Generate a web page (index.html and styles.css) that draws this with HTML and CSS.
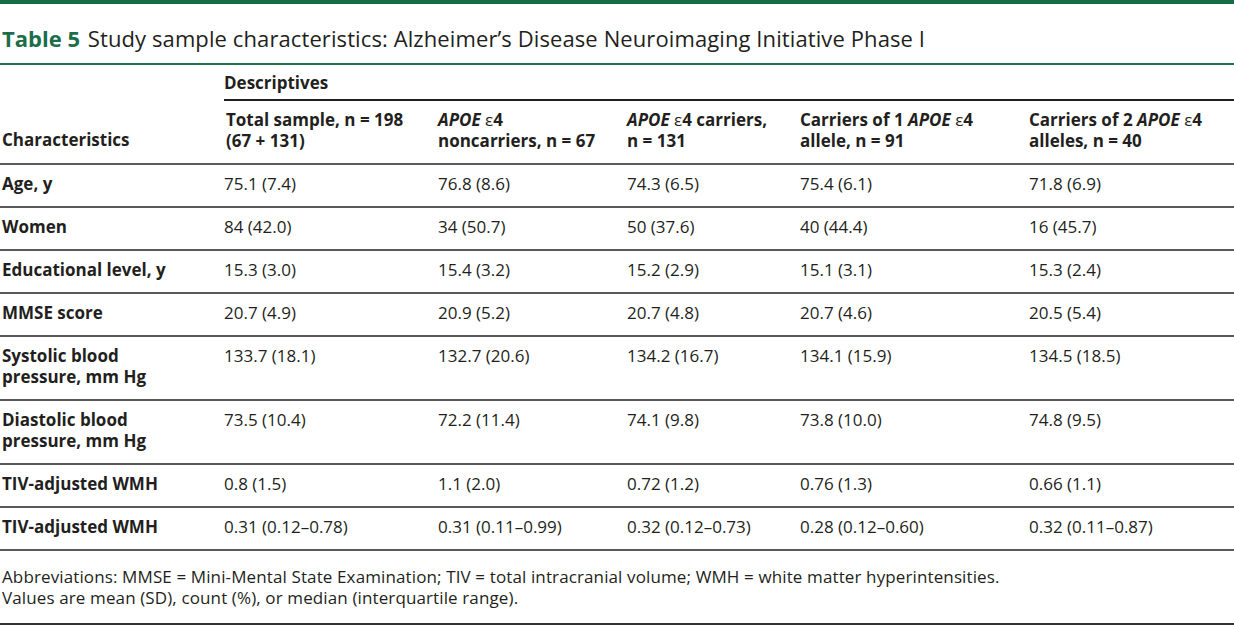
FILE: index.html
```html
<!DOCTYPE html>
<html lang="en">
<head>
<meta charset="utf-8">
<title>Table 5</title>
<link rel="stylesheet" href="styles.css">
</head>
<body>
<div class="topbar"></div>
<h1 class="title"><span class="label">Table 5</span> Study sample characteristics: Alzheimer’s Disease Neuroimaging Initiative Phase I</h1>
<table class="data">
  <colgroup>
    <col class="c1"><col class="c2"><col class="c3"><col class="c4"><col class="c5"><col class="c6">
  </colgroup>
  <thead>
    <tr class="hr1">
      <th class="rowhead" rowspan="2">Characteristics</th>
      <th class="group" colspan="5">Descriptives</th>
    </tr>
    <tr class="hr2">
      <th>Total sample, n = 198<br>(67 + 131)</th>
      <th><i>APOE</i> <span class="eps">ε</span>4<br>noncarriers, n = 67</th>
      <th><i>APOE</i> <span class="eps">ε</span>4 carriers,<br>n = 131</th>
      <th>Carriers of 1 <i>APOE</i> <span class="eps">ε</span>4<br>allele, n = 91</th>
      <th>Carriers of 2 <i>APOE</i> <span class="eps">ε</span>4<br>alleles, n = 40</th>
    </tr>
  </thead>
  <tbody>
    <tr><th>Age, y</th><td>75.1 (7.4)</td><td>76.8 (8.6)</td><td>74.3 (6.5)</td><td>75.4 (6.1)</td><td>71.8 (6.9)</td></tr>
    <tr><th>Women</th><td>84 (42.0)</td><td>34 (50.7)</td><td>50 (37.6)</td><td>40 (44.4)</td><td>16 (45.7)</td></tr>
    <tr><th>Educational level, y</th><td>15.3 (3.0)</td><td>15.4 (3.2)</td><td>15.2 (2.9)</td><td>15.1 (3.1)</td><td>15.3 (2.4)</td></tr>
    <tr><th>MMSE score</th><td>20.7 (4.9)</td><td>20.9 (5.2)</td><td>20.7 (4.8)</td><td>20.7 (4.6)</td><td>20.5 (5.4)</td></tr>
    <tr><th>Systolic blood<br>pressure, mm Hg</th><td>133.7 (18.1)</td><td>132.7 (20.6)</td><td>134.2 (16.7)</td><td>134.1 (15.9)</td><td>134.5 (18.5)</td></tr>
    <tr><th>Diastolic blood<br>pressure, mm Hg</th><td>73.5 (10.4)</td><td>72.2 (11.4)</td><td>74.1 (9.8)</td><td>73.8 (10.0)</td><td>74.8 (9.5)</td></tr>
    <tr><th>TIV-adjusted WMH</th><td>0.8 (1.5)</td><td>1.1 (2.0)</td><td>0.72 (1.2)</td><td>0.76 (1.3)</td><td>0.66 (1.1)</td></tr>
    <tr><th>TIV-adjusted WMH</th><td>0.31 (0.12–0.78)</td><td>0.31 (0.11–0.99)</td><td>0.32 (0.12–0.73)</td><td>0.28 (0.12–0.60)</td><td>0.32 (0.11–0.87)</td></tr>
  </tbody>
</table>
<div class="notes">
  <p>Abbreviations: MMSE = Mini-Mental State Examination; TIV = total intracranial volume; WMH = white matter hyperintensities.</p>
  <p>Values are mean (SD), count (%), or median (interquartile range).</p>
</div>
</body>
</html>
```

FILE: styles.css
```css
html, body {
  margin: 0;
  padding: 0;
  background: #ffffff;
}

body {
  width: 1234px;
  font-family: "Open Sans", "Noto Sans", sans-serif;
  color: #231f20;
  font-size: 17px;
  line-height: 21px;
}

.topbar {
  height: 4px;
  background: #186b47;
}

.title {
  margin: 20px 0 0 0;
  padding: 0 0 11px 2px;
  font-size: 22px;
  line-height: 28px;
  font-weight: 400;
  letter-spacing: 0.1px;
  color: #231f20;
  border-bottom: 2px solid #1d7350;
}

.title .label {
  font-weight: 700;
  color: #1b6e49;
  letter-spacing: 0;
  margin-right: 2px;
}

.data {
  width: 1234px;
  border-collapse: collapse;
  table-layout: fixed;
}

.c1 { width: 224px; }
.c2 { width: 214px; }
.c3 { width: 189px; }
.c4 { width: 173px; }
.c5 { width: 229px; }
.c6 { width: 205px; }

.data th,
.data td {
  text-align: left;
  vertical-align: top;
  padding: 8px 0 12px 0;
  font-size: 17px;
  line-height: 21px;
}

.data th {
  font-weight: 700;
}

.data td {
  font-weight: 400;
}

.data tr > :first-child {
  padding-left: 2px;
}

.data i {
  font-style: italic;
}

.eps {
  font-weight: 400;
}

.hr1 .group {
  padding: 7px 0 6px 0;
  border-bottom: 2px solid #231f20;
}

.hr1 .rowhead {
  vertical-align: bottom;
  padding: 0 0 13px 2px;
}

.hr2 th {
  padding: 8px 0 12px 0;
}

.data thead {
  border-bottom: 2px solid #5a5a5a;
}

.data tbody tr {
  border-bottom: 2px solid #5a5a5a;
}

.notes {
  padding: 15px 0 15px 2px;
  border-bottom: 2px solid #333333;
}

.notes p {
  margin: 0;
  font-size: 17px;
  line-height: 21px;
  letter-spacing: 0.12px;
}
```
